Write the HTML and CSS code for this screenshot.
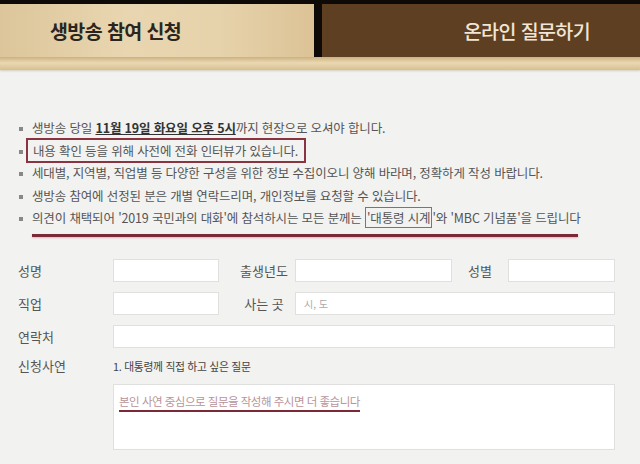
FILE: index.html
```html
<!DOCTYPE html>
<html lang="ko">
<head>
  <meta charset="UTF-8">
  <title>생방송 참여 신청</title>
  <link rel="stylesheet" href="styles.css">
</head>
<body>
  <div class="tabs">
    <div class="tab tab-on">생방송 참여 신청</div>
    <div class="tab-gap"></div>
    <div class="tab tab-off">온라인 질문하기</div>
  </div>
  <div class="shine"></div>

  <div class="page">
    <ul class="notice">
      <li>생방송 당일 <strong>11월 19일 화요일 오후 5시</strong>까지 현장으로 오셔야 합니다.</li>
      <li><span class="boxed">내용 확인 등을 위해 사전에 전화 인터뷰가 있습니다.</span></li>
      <li>세대별, 지역별, 직업별 등 다양한 구성을 위한 정보 수집이오니 양해 바라며, 정확하게 작성 바랍니다.</li>
      <li>생방송 참여에 선정된 분은 개별 연락드리며, 개인정보를 요청할 수 있습니다.</li>
      <li class="marked">의견이 채택되어 '2019 국민과의 대화'에 참석하시는 모든 분께는 <span class="small-box">'대통령 시계</span>'와 'MBC 기념품'을 드립니다</li>
    </ul>

    <div class="form">
      <div class="row">
        <label class="lbl">성명</label>
        <div class="field short"></div>
        <label class="lbl mid">출생년도</label>
        <div class="field year"></div>
        <label class="lbl sex">성별</label>
        <div class="field grow"></div>
      </div>
      <div class="row">
        <label class="lbl">직업</label>
        <div class="field short"></div>
        <label class="lbl mid">사는 곳</label>
        <div class="field grow"><span class="ph">시, 도</span></div>
      </div>
      <div class="row">
        <label class="lbl">연락처</label>
        <div class="field grow"></div>
      </div>
      <div class="row story">
        <label class="lbl">신청사연</label>
        <div class="story-body">
          <p class="q">1. 대통령께 직접 하고 싶은 질문</p>
          <div class="area"><span class="ph-red">본인 사연 중심으로 질문을 작성해 주시면 더 좋습니다</span></div>
        </div>
      </div>
    </div>
  </div>
</body>
</html>
```

FILE: styles.css
```css
body {
  margin: 0;
  background: #f2f2f1;
  font-family: "Noto Sans CJK KR", "Noto Sans", sans-serif;
  color: #555;
}

.tabs {
  display: flex;
  height: 57px;
  background: #0d0a08;
  padding-top: 4px;
  box-sizing: border-box;
}

.tab {
  display: flex;
  align-items: center;
  font-size: 19.5px;
  font-weight: bold;
  letter-spacing: -0.6px;
}

.tab-on {
  width: 314px;
  padding-left: 50px;
  box-sizing: border-box;
  color: #2b2520;
  background: linear-gradient(90deg, #dcc59a 0%, #e9d6b0 40%, #e6d2ab 70%, #dcc396 100%);
}

.tab-gap {
  width: 8px;
}

.tab-off {
  flex: 1;
  justify-content: flex-end;
  padding-right: 50px;
  color: #f1e6d6;
  font-weight: 500;
  background: #5e3f22;
}

.shine {
  height: 13px;
  background: linear-gradient(180deg, #cdb27e 0%, #ead8b4 45%, #d8bf8e 100%);
  box-shadow: 0 1px 2px rgba(120, 90, 40, 0.25);
}

.page {
  padding: 47px 25px 0 18px;
}

.notice {
  list-style: none;
  margin: 0;
  padding: 0;
  font-size: 12.5px;
  letter-spacing: -0.15px;
}

.notice li {
  position: relative;
  height: 22.5px;
  line-height: 22px;
  padding-left: 14px;
  white-space: nowrap;
}

.notice li::before {
  content: "";
  position: absolute;
  left: 1px;
  top: 10px;
  width: 4px;
  height: 4px;
  background: #888;
}

.notice strong {
  color: #333;
  text-decoration: underline;
}

.boxed {
  margin-left: -6px;
  padding: 1px 6px 1px 5px;
  border: 2px solid #8a3441;
}

.marked::after {
  content: "";
  position: absolute;
  left: 14px;
  top: 27px;
  width: 546px;
  height: 3px;
  background: #7a2a36;
  box-shadow: 0 1px 2px rgba(220, 120, 130, 0.5);
}

.small-box {
  border: 1px solid #777;
  padding: 0 1px;
}

.form {
  margin-top: 29px;
  display: flex;
  flex-direction: column;
  gap: 10px;
  font-size: 13px;
}

.row {
  display: flex;
  align-items: center;
  height: 23px;
}

.lbl {
  width: 95px;
  flex-shrink: 0;
}

.lbl.mid {
  width: 62px;
  text-align: center;
  margin: 0 0 0 14px;
}

.lbl.sex {
  width: 56px;
  text-align: center;
}

.field {
  height: 23px;
  background: #fff;
  border: 1px solid #e0e0de;
  box-sizing: border-box;
  display: flex;
  align-items: center;
}

.short {
  width: 106px;
}

.year {
  width: 157px;
}

.grow {
  flex: 1;
}

.ph {
  font-size: 10px;
  color: #aaa;
  padding-left: 8px;
}

.row.story {
  align-items: flex-start;
  height: auto;
  margin-top: -2px;
}

.story-body {
  flex: 1;
}

.q {
  margin: 3px 0 10px;
  line-height: 15px;
  font-size: 10.8px;
  letter-spacing: -0.3px;
  color: #444;
}

.area {
  height: 66px;
  background: #fff;
  border: 1px solid #e0e0de;
  padding: 6px 0 0 5px;
  box-sizing: border-box;
}

.ph-red {
  display: inline-block;
  font-size: 11.5px;
  color: #b9949a;
  letter-spacing: -0.5px;
  padding-bottom: 1px;
  border-bottom: 2px solid #7a2a36;
}
```
